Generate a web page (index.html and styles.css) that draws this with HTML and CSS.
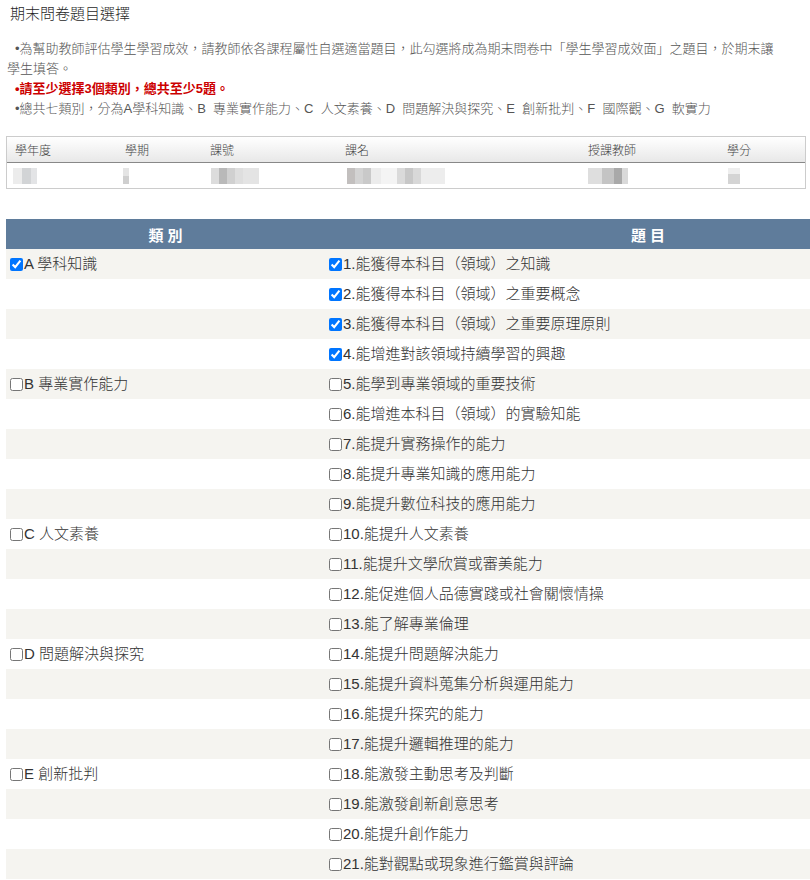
FILE: index.html
```html
<!DOCTYPE html>
<html lang="zh-Hant">
<head>
<meta charset="utf-8">
<title>期末問卷題目選擇</title>
<link rel="stylesheet" href="styles.css">
</head>
<body>
<div class="page">
  <h1 class="title">期末問卷題目選擇</h1>
  <div class="notes">
    <p class="note">•為幫助教師評估學生學習成效，請教師依各課程屬性自選適當題目，此勾選將成為期末問卷中「學生學習成效面」之題目，於期末讓學生填答。</p>
    <p class="note warn">•請至少選擇3個類別，總共至少5題。</p>
    <p class="note">•總共七類別，分為A學科知識、B&nbsp; 專業實作能力、C&nbsp; 人文素養、D&nbsp; 問題解決與探究、E&nbsp; 創新批判、F&nbsp; 國際觀、G&nbsp; 軟實力</p>
  </div>

  <div class="info">
    <div class="info-row info-head">
      <div class="c1">學年度</div>
      <div class="c2">學期</div>
      <div class="c3">課號</div>
      <div class="c4">課名</div>
      <div class="c5">授課教師</div>
      <div class="c6">學分</div>
    </div>
    <div class="info-row info-data">
      <div class="c1"><span class="blur b-year"></span></div>
      <div class="c2"><span class="blur b-term"></span></div>
      <div class="c3"><span class="blur b-code"></span></div>
      <div class="c4"><span class="blur b-name"></span></div>
      <div class="c5"><span class="blur b-teacher"></span></div>
      <div class="c6"><span class="blur b-credit"></span></div>
    </div>
  </div>

  <div class="qwrap">
    <table class="qtable">
      <thead>
        <tr><th class="qcat">類 別</th><th class="qitem">題 目</th></tr>
      </thead>
      <tbody>
        <tr><td><label class="chk"><input type="checkbox" checked>A 學科知識</label></td><td><label class="chk"><input type="checkbox" checked>1.能獲得本科目（領域）之知識</label></td></tr>
        <tr><td></td><td><label class="chk"><input type="checkbox" checked>2.能獲得本科目（領域）之重要概念</label></td></tr>
        <tr><td></td><td><label class="chk"><input type="checkbox" checked>3.能獲得本科目（領域）之重要原理原則</label></td></tr>
        <tr><td></td><td><label class="chk"><input type="checkbox" checked>4.能增進對該領域持續學習的興趣</label></td></tr>
        <tr><td><label class="chk"><input type="checkbox">B 專業實作能力</label></td><td><label class="chk"><input type="checkbox">5.能學到專業領域的重要技術</label></td></tr>
        <tr><td></td><td><label class="chk"><input type="checkbox">6.能增進本科目（領域）的實驗知能</label></td></tr>
        <tr><td></td><td><label class="chk"><input type="checkbox">7.能提升實務操作的能力</label></td></tr>
        <tr><td></td><td><label class="chk"><input type="checkbox">8.能提升專業知識的應用能力</label></td></tr>
        <tr><td></td><td><label class="chk"><input type="checkbox">9.能提升數位科技的應用能力</label></td></tr>
        <tr><td><label class="chk"><input type="checkbox">C 人文素養</label></td><td><label class="chk"><input type="checkbox">10.能提升人文素養</label></td></tr>
        <tr><td></td><td><label class="chk"><input type="checkbox">11.能提升文學欣賞或審美能力</label></td></tr>
        <tr><td></td><td><label class="chk"><input type="checkbox">12.能促進個人品德實踐或社會關懷情操</label></td></tr>
        <tr><td></td><td><label class="chk"><input type="checkbox">13.能了解專業倫理</label></td></tr>
        <tr><td><label class="chk"><input type="checkbox">D 問題解決與探究</label></td><td><label class="chk"><input type="checkbox">14.能提升問題解決能力</label></td></tr>
        <tr><td></td><td><label class="chk"><input type="checkbox">15.能提升資料蒐集分析與運用能力</label></td></tr>
        <tr><td></td><td><label class="chk"><input type="checkbox">16.能提升探究的能力</label></td></tr>
        <tr><td></td><td><label class="chk"><input type="checkbox">17.能提升邏輯推理的能力</label></td></tr>
        <tr><td><label class="chk"><input type="checkbox">E 創新批判</label></td><td><label class="chk"><input type="checkbox">18.能激發主動思考及判斷</label></td></tr>
        <tr><td></td><td><label class="chk"><input type="checkbox">19.能激發創新創意思考</label></td></tr>
        <tr><td></td><td><label class="chk"><input type="checkbox">20.能提升創作能力</label></td></tr>
        <tr><td></td><td><label class="chk"><input type="checkbox">21.能對觀點或現象進行鑑賞與評論</label></td></tr>
      </tbody>
    </table>
  </div>
</div>
</body>
</html>
```
FILE: styles.css
```css
html, body {
  margin: 0;
  padding: 0;
  overflow-x: hidden;
}
body {
  font-family: "Liberation Sans", "Noto Sans CJK TC", sans-serif;
  font-weight: 300;
  color: #333;
  background: #fff;
}
.page {
  width: 810px;
  overflow: hidden;
}
.title {
  margin: 0;
  padding: 4px 10px 0;
  font-size: 15px;
  font-weight: 300;
  line-height: 20px;
  color: #1f1f1f;
}
.notes {
  box-sizing: border-box;
  width: 782px;
  margin-top: 15px;
  padding: 0 7px;
}
.note {
  margin: 0;
  font-size: 13px;
  line-height: 20px;
  text-indent: 8px;
  color: #555;
}
.note.warn {
  color: #cc0000;
  font-weight: bold;
}

.info {
  box-sizing: border-box;
  width: 800px;
  margin: 17px 0 0 6px;
  border: 1px solid #cccccc;
  font-size: 12px;
  color: #444;
}
.info-row {
  display: grid;
  grid-template-columns: 110px 85px 135px 243px 139px 1fr;
  align-items: center;
}
.info-row > div {
  padding-left: 8px;
}
.info-head {
  height: 25px;
  background: linear-gradient(#ffffff, #e8e8e8);
  border-bottom: 1px solid #888;
}
.info-data {
  height: 25px;
}
.blur {
  display: block;
  height: 16px;
}
.b-year {
  width: 24px;
  margin-left: -2px;
  background: linear-gradient(90deg, #ececec 0 9px, #d2d4d6 9px 18px, #e3e4e6 18px);
}
.b-term {
  width: 6px;
  margin-left: -2px;
  background: linear-gradient(#e4e4e4 0 50%, #cfcfcf 50%);
}
.b-code {
  width: 48px;
  margin-left: 1px;
  background: linear-gradient(90deg, #dcdcdc 0 8px, #b9b9b9 8px 16px, #d0d0d0 16px 24px, #dedede 24px 32px, #e4e4e4 32px);
}
.b-name {
  width: 98px;
  margin-left: 2px;
  background: linear-gradient(90deg, #c2bfbe 0 8px, #d3d3d3 8px 16px, #c9c9c9 16px 24px, #ececec 24px 34px, #f4f4f4 34px 50px, #dadada 50px 58px, #c7c7c7 58px 66px, #d8d8d8 66px 74px, #ededed 74px);
}
.b-teacher {
  width: 40px;
  margin-left: 0;
  background: linear-gradient(90deg, #dedede 0 14px, #c4c4c4 14px 26px, #a9a9a9 26px 34px, #d9d9d9 34px);
}
.b-credit {
  width: 12px;
  margin-left: 1px;
  background: linear-gradient(#eeeeee 0 40%, #d4d4d4 40%);
}

.qwrap {
  margin: 30px 0 0 6px;
  width: 804px;
  overflow: hidden;
}
.qtable {
  width: 965px;
  border-collapse: collapse;
  table-layout: fixed;
  font-size: 15px;
  color: #333;
}
.qcat {
  width: 319px;
}
.qtable th {
  height: 30px;
  padding: 0;
  background: #5f7c9b;
  color: #fff;
  font-weight: bold;
  font-size: 15px;
  text-align: center;
}
.qtable td {
  height: 30px;
  padding: 0 0 0 4px;
  vertical-align: middle;
}
.qtable tbody tr:nth-child(odd) {
  background: #f5f4f0;
}
.chk {
  display: inline-flex;
  align-items: center;
  line-height: 20px;
}
.chk input {
  width: 13px;
  height: 13px;
  margin: 0 1px 0 0;
}
```
